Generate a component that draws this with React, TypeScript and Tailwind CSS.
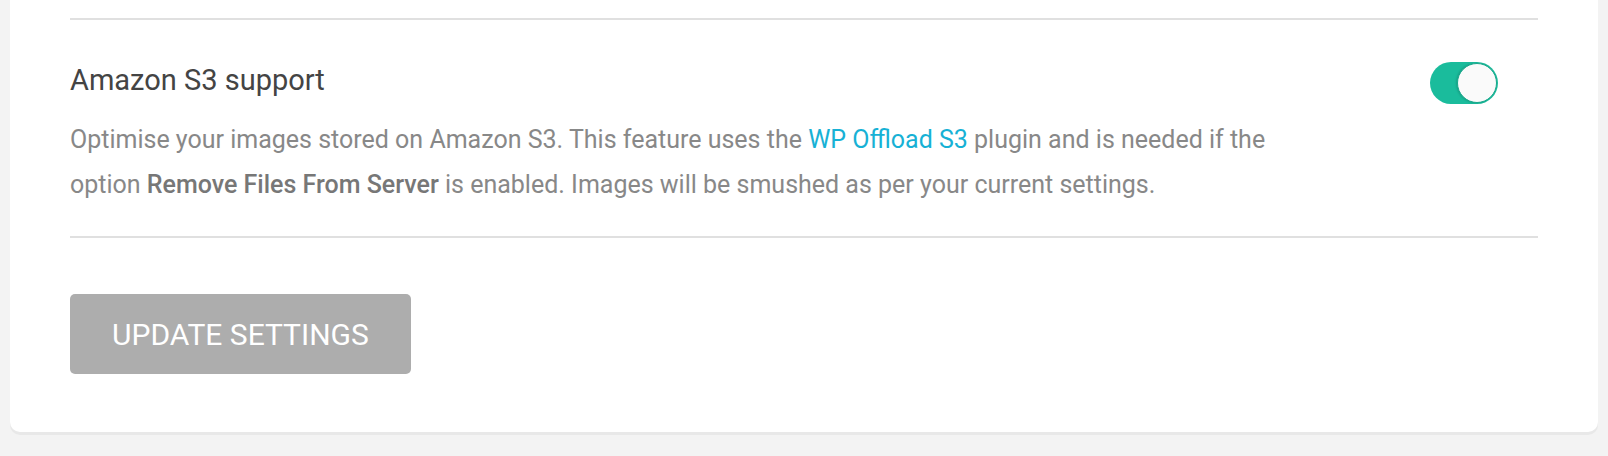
export default function App() {
  return (
    <div className="min-h-screen bg-[#f3f3f3] font-['Roboto',sans-serif]">
      <div className="mx-[10px] rounded-b-[10px] bg-white px-[60px] pt-[18px] pb-[58px] shadow-[0_3px_0_#e8e8e8]">
        <div className="border-t-2 border-[#e0e0e0]" />

        {/* amazon s3 row */}
        <div className="flex justify-between pt-[40px] pb-[29px]">
          <div className="max-w-[1240px]">
            <h3 className="text-[29px] leading-[40px] font-normal text-[#444]">
              Amazon S3 support
            </h3>
            <p className="mt-[17px] text-[25px] leading-[45px] text-[#888]">
              Optimise your images stored on Amazon S3. This feature uses the{" "}
              <a href="#" className="text-[#17b1d5]">
                WP Offload S3
              </a>{" "}
              plugin and is needed if the option{" "}
              <strong className="font-medium text-[#777]">Remove Files From Server</strong> is
              enabled. Images will be smushed as per your current settings.
            </p>
          </div>
          <button
            aria-label="Toggle Amazon S3 support"
            className="mt-[2px] mr-[40px] flex h-[42px] w-[68px] shrink-0 items-center justify-end rounded-full bg-[#1abc9c] pr-px"
          >
            <span className="h-[40px] w-[40px] rounded-full border border-[#17a88b] bg-[#fafafa] shadow-[-1px_0_2px_rgba(0,0,0,0.15)]" />
          </button>
        </div>

        <div className="border-t-2 border-[#e0e0e0]" />

        <div className="pt-[56px]">
          <button className="h-[80px] rounded-[5px] bg-[#adadad] px-[42px] text-[30px] font-normal text-white uppercase">
            Update Settings
          </button>
        </div>
      </div>
    </div>
  );
}
